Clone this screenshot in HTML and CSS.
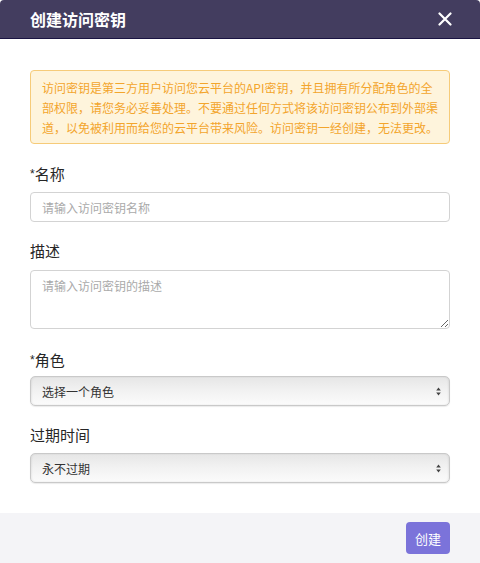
FILE: index.html
```html
<!DOCTYPE html>
<html lang="zh-CN">
<head>
<meta charset="utf-8">
<title>创建访问密钥</title>
<link rel="stylesheet" href="styles.css">
</head>
<body>
<div class="modal">
  <div class="modal-header">
    <h1 class="modal-title">创建访问密钥</h1>
    <button class="close-btn" aria-label="关闭">
      <svg width="14" height="14" viewBox="0 0 14 14"><path d="M1.5 1.5 L12.5 12.5 M12.5 1.5 L1.5 12.5" stroke="#fff" stroke-width="2.2" stroke-linecap="round"/></svg>
    </button>
  </div>
  <div class="modal-body">
    <div class="alert">访问密钥是第三方用户访问您云平台的API密钥，并且拥有所分配角色的全部权限，请您务必妥善处理。不要通过任何方式将该访问密钥公布到外部渠道，以免被利用而给您的云平台带来风险。访问密钥一经创建，无法更改。</div>

    <label class="label label-first"><span class="req">*</span>名称</label>
    <input class="input" type="text" placeholder="请输入访问密钥名称">

    <label class="label label-desc">描述</label>
    <textarea class="textarea" placeholder="请输入访问密钥的描述"></textarea>

    <label class="label label-role"><span class="req">*</span>角色</label>
    <div class="select-wrap select-role">
      <select class="select"><option>选择一个角色</option></select>
      <svg class="select-arrow" width="5" height="9" viewBox="0 0 5 9"><path d="M2.5 0.5 L4.8 3.6 L0.2 3.6 Z M2.5 8.5 L4.8 5.4 L0.2 5.4 Z" fill="#444"/></svg>
    </div>

    <label class="label label-exp">过期时间</label>
    <div class="select-wrap select-exp">
      <select class="select"><option>永不过期</option></select>
      <svg class="select-arrow" width="5" height="9" viewBox="0 0 5 9"><path d="M2.5 0.5 L4.8 3.6 L0.2 3.6 Z M2.5 8.5 L4.8 5.4 L0.2 5.4 Z" fill="#444"/></svg>
    </div>
  </div>
  <div class="modal-footer">
    <button class="btn-primary">创建</button>
  </div>
</div>
</body>
</html>
```
FILE: styles.css
```css
* { box-sizing: border-box; }
html, body {
  margin: 0;
  padding: 0;
  background: #fff;
}
body {
  font-family: "Noto Sans CJK SC", "Liberation Sans", sans-serif;
  color: #222;
}
.modal {
  width: 480px;
  height: 563px;
  display: flex;
  flex-direction: column;
  background: #fff;
}
.modal-header {
  height: 39px;
  background: #433d5f;
  border-bottom: 1px solid #1a1443;
  border-radius: 4px 4px 0 0;
  display: flex;
  align-items: center;
  justify-content: space-between;
  padding: 0 28px 0 30px;
}
.modal-title {
  margin: 0;
  font-size: 16px;
  font-weight: 700;
  color: #fff;
  line-height: 20px;
}
.close-btn {
  border: 0;
  background: transparent;
  padding: 0;
  width: 14px;
  height: 14px;
  display: flex;
}
.modal-body {
  flex: 1;
  padding: 31px 30px 0 30px;
  display: flex;
  flex-direction: column;
}
.alert {
  background: #fef4dc;
  border: 1px solid #f6cb79;
  border-radius: 4px;
  color: #f3a52c;
  font-size: 12px;
  line-height: 20px;
  padding: 7px 11px 5px 11px;
}
.label {
  display: block;
  font-size: 15px;
  line-height: 20px;
  color: #262626;
}
.req {
  font-family: "Liberation Sans", sans-serif;
  font-size: 12px;
  vertical-align: 2px;
}
.label-first { margin-top: 20px; }
.label-desc { margin-top: 19px; }
.label-role { margin-top: 21px; }
.label-exp { margin-top: 19px; }
.input {
  display: block;
  margin-top: 8px;
  height: 30px;
  width: 100%;
  border: 1px solid #d3d3d3;
  border-radius: 4px;
  padding: 0 11px;
  font-family: inherit;
  font-size: 12px;
  color: #333;
  outline: none;
}
.textarea {
  display: block;
  margin-top: 9px;
  height: 59px;
  width: 100%;
  border: 1px solid #d3d3d3;
  border-radius: 4px;
  padding: 6px 11px;
  font-family: inherit;
  font-size: 12px;
  line-height: 18px;
  color: #333;
  outline: none;
}
.input::placeholder, .textarea::placeholder {
  color: #aaa;
}
.select-wrap {
  position: relative;
  height: 30px;
}
.select-role { margin-top: 6px; }
.select-exp { margin-top: 8px; }
.select {
  -webkit-appearance: none;
  appearance: none;
  width: 100%;
  height: 30px;
  border: 1px solid #c9c9c9;
  border-radius: 5px;
  padding: 0 11px;
  font-family: inherit;
  font-size: 12px;
  color: #333;
  background: linear-gradient(#e6e6e6, #f1f1f1 45%, #fbfbfb);
  box-shadow: inset 1px 0 2px rgba(0,0,0,0.06), inset -1px 0 2px rgba(0,0,0,0.06), 0 1px 1px rgba(0,0,0,0.08);
  outline: none;
}
.select-arrow {
  position: absolute;
  right: 9px;
  top: 11px;
  pointer-events: none;
}
.modal-footer {
  height: 50px;
  background: #f4f4f7;
  display: flex;
  justify-content: flex-end;
  align-items: center;
  padding: 0 30px;
}
.btn-primary {
  width: 44px;
  height: 32px;
  border: 0;
  border-radius: 4px;
  background: #7b73da;
  color: #fff;
  font-family: inherit;
  font-size: 13px;
  padding: 0;
}
```
